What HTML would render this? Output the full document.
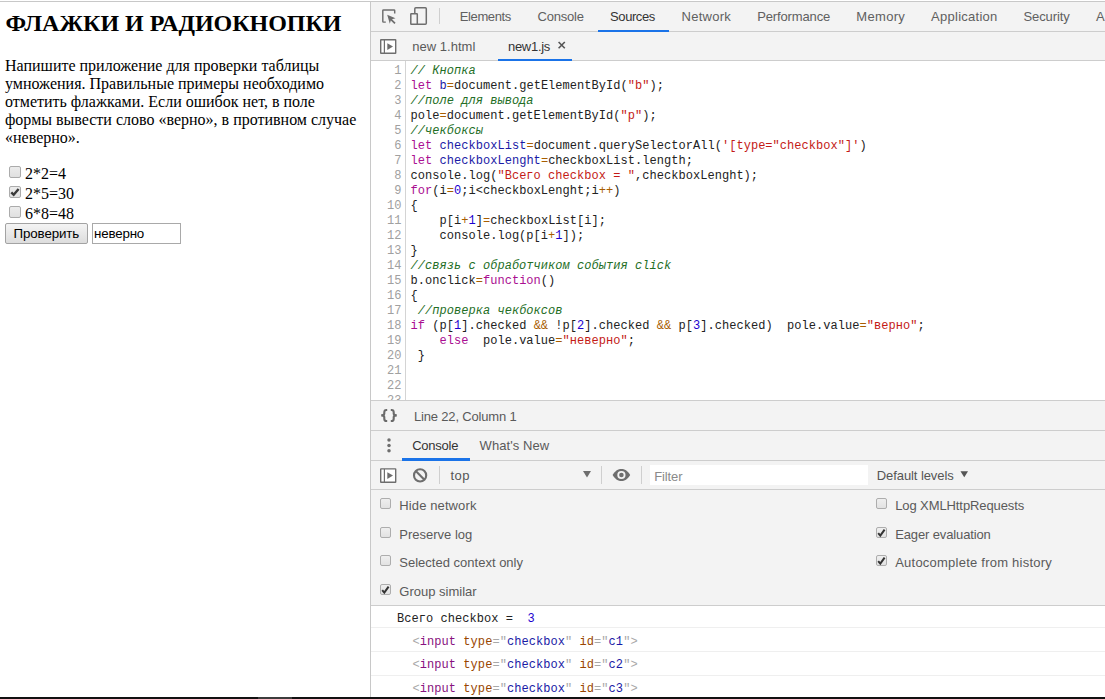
<!DOCTYPE html>
<html><head><meta charset="utf-8">
<style>
*{box-sizing:border-box;margin:0;padding:0}
html,body{width:1105px;height:699px;overflow:hidden;background:#fff;position:relative}
.t{position:absolute;white-space:nowrap}
b,i{font-weight:normal;font-style:normal}
.k{color:#aa0d91}.d{color:#1a1aa6}.s{color:#c41a16}.n{color:#1c00cf}.c{color:#236e25;font-style:italic}.o{color:#a85d00}
.tg{color:#881280}.an{color:#994500}.av{color:#1a1aa6}.br{color:#a8a8a8}
.cb{position:absolute;width:12px;height:12px;border:1px solid #ababab;border-radius:2px;background:linear-gradient(#ececec,#e0e0e0)}
.chk{position:absolute;width:11px;height:11px;border:1px solid #adadad;border-radius:2px;background:linear-gradient(#efefef,#e2e2e2)}
</style></head><body>
<div class="t" style="left:0px;top:0px;width:1105px;height:699px;background:#fff;"></div>
<div class="t" style="left:0px;top:1px;width:1105px;height:1px;background:#c8c8c8;"></div>
<div class="t" style="left:5.5px;top:10px;font:24px/26px 'Liberation Serif',serif;font-weight:bold;color:#000;letter-spacing:-0.037px;">ФЛАЖКИ И РАДИОКНОПКИ</div>
<div class="t" style="left:5px;top:57px;font:16px/17px 'Liberation Serif',serif;color:#000;">Напишите приложение для проверки таблицы</div>
<div class="t" style="left:5px;top:75px;font:16px/17px 'Liberation Serif',serif;color:#000;">умножения. Правильные примеры необходимо</div>
<div class="t" style="left:5px;top:93px;font:16px/17px 'Liberation Serif',serif;color:#000;">отметить флажками. Если ошибок нет, в поле</div>
<div class="t" style="left:5px;top:111px;font:16px/17px 'Liberation Serif',serif;color:#000;">формы вывести слово «верно», в противном случае</div>
<div class="t" style="left:5px;top:129px;font:16px/17px 'Liberation Serif',serif;color:#000;">«неверно».</div>
<div class="cb" style="left:9px;top:166px"></div>
<div class="t" style="left:25px;top:165px;font:16px/17px 'Liberation Serif',serif;color:#000;">2*2=4</div>
<div class="cb" style="left:9px;top:186px"><svg width="12" height="12" style="position:absolute;left:-1px;top:-1px"><path d="M2.3 6.3 L4.7 8.8 L9.6 3" stroke="#3a3a3a" stroke-width="2.4" fill="none"/></svg></div>
<div class="t" style="left:25px;top:185px;font:16px/17px 'Liberation Serif',serif;color:#000;">2*5=30</div>
<div class="cb" style="left:9px;top:206px"></div>
<div class="t" style="left:25px;top:205px;font:16px/17px 'Liberation Serif',serif;color:#000;">6*8=48</div>
<div class="t" style="left:5px;top:223px;width:83px;height:21px;border:1px solid #a3a3a3;border-radius:2px;background:linear-gradient(#f4f4f4,#dddddd)"></div>
<div class="t" style="left:13.5px;top:226px;font:13.33px/15px 'Liberation Sans',sans-serif;color:#000;letter-spacing:-0.113px;">Проверить</div>
<div class="t" style="left:92px;top:223px;width:89px;height:21px;border:1px solid #a9a9a9;background:#fff"></div>
<div class="t" style="left:94px;top:226px;font:13.33px/15px 'Liberation Sans',sans-serif;color:#000;letter-spacing:-0.170px;">неверно</div>
<div class="t" style="left:370px;top:2px;width:735px;height:695px;background:#f3f3f3;"></div>
<div class="t" style="left:370px;top:2px;width:1px;height:695px;background:#c8c8c8;"></div>
<div class="t" style="left:371px;top:31px;width:734px;height:1px;background:#cdcdcd;"></div>
<div class="t" style="left:459.7px;top:9px;font:13px/15px 'Liberation Sans',sans-serif;color:#606060;letter-spacing:-0.361px;">Elements</div>
<div class="t" style="left:537.6px;top:9px;font:13px/15px 'Liberation Sans',sans-serif;color:#606060;letter-spacing:-0.228px;">Console</div>
<div class="t" style="left:610.1px;top:9px;font:13px/15px 'Liberation Sans',sans-serif;color:#333;letter-spacing:-0.427px;">Sources</div>
<div class="t" style="left:681.6px;top:9px;font:13px/15px 'Liberation Sans',sans-serif;color:#606060;letter-spacing:0.246px;">Network</div>
<div class="t" style="left:757.2px;top:9px;font:13px/15px 'Liberation Sans',sans-serif;color:#606060;letter-spacing:-0.138px;">Performance</div>
<div class="t" style="left:856.3px;top:9px;font:13px/15px 'Liberation Sans',sans-serif;color:#606060;letter-spacing:0.326px;">Memory</div>
<div class="t" style="left:931.1px;top:9px;font:13px/15px 'Liberation Sans',sans-serif;color:#606060;letter-spacing:0.264px;">Application</div>
<div class="t" style="left:1023.5px;top:9px;font:13px/15px 'Liberation Sans',sans-serif;color:#606060;letter-spacing:-0.095px;">Security</div>
<div class="t" style="left:1096px;top:9px;font:13px/15px 'Liberation Sans',sans-serif;color:#606060;">A</div>
<div class="t" style="left:598px;top:30px;width:71px;height:2px;background:#1a73e8;"></div>
<div class="t" style="left:371px;top:60px;width:734px;height:1px;background:#cdcdcd;"></div>
<div class="t" style="left:412.2px;top:39px;font:13px/15px 'Liberation Sans',sans-serif;color:#5a5a5a;letter-spacing:0.024px;">new 1.html</div>
<div class="t" style="left:508px;top:39px;font:13px/15px 'Liberation Sans',sans-serif;color:#333;letter-spacing:-0.297px;">new1.js</div>
<div class="t" style="left:498px;top:59px;width:74px;height:2px;background:#1a73e8;"></div>
<div class="t" style="left:371px;top:61px;width:734px;height:339px;background:#fff;"></div>
<div class="t" style="left:405px;top:61px;width:1px;height:339px;background:#d4d4d4;"></div>
<div class="t" style="left:371px;top:400px;width:734px;height:1px;background:#cdcdcd;"></div>
<div class="t" style="left:371px;top:61px;width:734px;height:339px;overflow:hidden">
<div class="t" style="left:23.30000000000001px;top:3px;font:12px/14px 'Liberation Mono',monospace;color:#a0a0a0;">1</div>
<div class="t" style="left:39.5px;top:3px;font:12px/14px 'Liberation Mono',monospace;color:#222;white-space:pre;letter-spacing:0.04px;"><i class="c">// Кнопка</i></div>
<div class="t" style="left:23.30000000000001px;top:18px;font:12px/14px 'Liberation Mono',monospace;color:#a0a0a0;">2</div>
<div class="t" style="left:39.5px;top:18px;font:12px/14px 'Liberation Mono',monospace;color:#222;white-space:pre;letter-spacing:0.04px;"><b class="k">let</b> <b class="d">b</b><b class="o">=</b>document.getElementById(<b class="s">"b"</b>);</div>
<div class="t" style="left:23.30000000000001px;top:33px;font:12px/14px 'Liberation Mono',monospace;color:#a0a0a0;">3</div>
<div class="t" style="left:39.5px;top:33px;font:12px/14px 'Liberation Mono',monospace;color:#222;white-space:pre;letter-spacing:0.04px;"><i class="c">//поле для вывода</i></div>
<div class="t" style="left:23.30000000000001px;top:48px;font:12px/14px 'Liberation Mono',monospace;color:#a0a0a0;">4</div>
<div class="t" style="left:39.5px;top:48px;font:12px/14px 'Liberation Mono',monospace;color:#222;white-space:pre;letter-spacing:0.04px;">pole<b class="o">=</b>document.getElementById(<b class="s">"p"</b>);</div>
<div class="t" style="left:23.30000000000001px;top:63px;font:12px/14px 'Liberation Mono',monospace;color:#a0a0a0;">5</div>
<div class="t" style="left:39.5px;top:63px;font:12px/14px 'Liberation Mono',monospace;color:#222;white-space:pre;letter-spacing:0.04px;"><i class="c">//чекбоксы</i></div>
<div class="t" style="left:23.30000000000001px;top:78px;font:12px/14px 'Liberation Mono',monospace;color:#a0a0a0;">6</div>
<div class="t" style="left:39.5px;top:78px;font:12px/14px 'Liberation Mono',monospace;color:#222;white-space:pre;letter-spacing:0.04px;"><b class="k">let</b> <b class="d">checkboxList</b><b class="o">=</b>document.querySelectorAll(<b class="s">'[type="checkbox"]'</b>)</div>
<div class="t" style="left:23.30000000000001px;top:93px;font:12px/14px 'Liberation Mono',monospace;color:#a0a0a0;">7</div>
<div class="t" style="left:39.5px;top:93px;font:12px/14px 'Liberation Mono',monospace;color:#222;white-space:pre;letter-spacing:0.04px;"><b class="k">let</b> <b class="d">checkboxLenght</b><b class="o">=</b>checkboxList.length;</div>
<div class="t" style="left:23.30000000000001px;top:108px;font:12px/14px 'Liberation Mono',monospace;color:#a0a0a0;">8</div>
<div class="t" style="left:39.5px;top:108px;font:12px/14px 'Liberation Mono',monospace;color:#222;white-space:pre;letter-spacing:0.04px;">console.log(<b class="s">"Всего checkbox = "</b>,checkboxLenght);</div>
<div class="t" style="left:23.30000000000001px;top:123px;font:12px/14px 'Liberation Mono',monospace;color:#a0a0a0;">9</div>
<div class="t" style="left:39.5px;top:123px;font:12px/14px 'Liberation Mono',monospace;color:#222;white-space:pre;letter-spacing:0.04px;"><b class="k">for</b>(i<b class="o">=</b><b class="n">0</b>;i&lt;checkboxLenght;i<b class="o">++</b>)</div>
<div class="t" style="left:16.100000000000023px;top:138px;font:12px/14px 'Liberation Mono',monospace;color:#a0a0a0;">10</div>
<div class="t" style="left:39.5px;top:138px;font:12px/14px 'Liberation Mono',monospace;color:#222;white-space:pre;letter-spacing:0.04px;">{</div>
<div class="t" style="left:16.100000000000023px;top:153px;font:12px/14px 'Liberation Mono',monospace;color:#a0a0a0;">11</div>
<div class="t" style="left:39.5px;top:153px;font:12px/14px 'Liberation Mono',monospace;color:#222;white-space:pre;letter-spacing:0.04px;">    p[i<b class="o">+</b><b class="n">1</b>]<b class="o">=</b>checkboxList[i];</div>
<div class="t" style="left:16.100000000000023px;top:168px;font:12px/14px 'Liberation Mono',monospace;color:#a0a0a0;">12</div>
<div class="t" style="left:39.5px;top:168px;font:12px/14px 'Liberation Mono',monospace;color:#222;white-space:pre;letter-spacing:0.04px;">    console.log(p[i<b class="o">+</b><b class="n">1</b>]);</div>
<div class="t" style="left:16.100000000000023px;top:183px;font:12px/14px 'Liberation Mono',monospace;color:#a0a0a0;">13</div>
<div class="t" style="left:39.5px;top:183px;font:12px/14px 'Liberation Mono',monospace;color:#222;white-space:pre;letter-spacing:0.04px;">}</div>
<div class="t" style="left:16.100000000000023px;top:198px;font:12px/14px 'Liberation Mono',monospace;color:#a0a0a0;">14</div>
<div class="t" style="left:39.5px;top:198px;font:12px/14px 'Liberation Mono',monospace;color:#222;white-space:pre;letter-spacing:0.04px;"><i class="c">//связь с обработчиком события click</i></div>
<div class="t" style="left:16.100000000000023px;top:213px;font:12px/14px 'Liberation Mono',monospace;color:#a0a0a0;">15</div>
<div class="t" style="left:39.5px;top:213px;font:12px/14px 'Liberation Mono',monospace;color:#222;white-space:pre;letter-spacing:0.04px;">b.onclick<b class="o">=</b><b class="k">function</b>()</div>
<div class="t" style="left:16.100000000000023px;top:228px;font:12px/14px 'Liberation Mono',monospace;color:#a0a0a0;">16</div>
<div class="t" style="left:39.5px;top:228px;font:12px/14px 'Liberation Mono',monospace;color:#222;white-space:pre;letter-spacing:0.04px;">{</div>
<div class="t" style="left:16.100000000000023px;top:243px;font:12px/14px 'Liberation Mono',monospace;color:#a0a0a0;">17</div>
<div class="t" style="left:39.5px;top:243px;font:12px/14px 'Liberation Mono',monospace;color:#222;white-space:pre;letter-spacing:0.04px;"> <i class="c">//проверка чекбоксов</i></div>
<div class="t" style="left:16.100000000000023px;top:258px;font:12px/14px 'Liberation Mono',monospace;color:#a0a0a0;">18</div>
<div class="t" style="left:39.5px;top:258px;font:12px/14px 'Liberation Mono',monospace;color:#222;white-space:pre;letter-spacing:0.04px;"><b class="k">if</b> (p[<b class="n">1</b>].checked <b class="o">&amp;&amp;</b> !p[<b class="n">2</b>].checked <b class="o">&amp;&amp;</b> p[<b class="n">3</b>].checked)  pole.value<b class="o">=</b><b class="s">"верно"</b>;</div>
<div class="t" style="left:16.100000000000023px;top:273px;font:12px/14px 'Liberation Mono',monospace;color:#a0a0a0;">19</div>
<div class="t" style="left:39.5px;top:273px;font:12px/14px 'Liberation Mono',monospace;color:#222;white-space:pre;letter-spacing:0.04px;">    <b class="k">else</b>  pole.value<b class="o">=</b><b class="s">"неверно"</b>;</div>
<div class="t" style="left:16.100000000000023px;top:288px;font:12px/14px 'Liberation Mono',monospace;color:#a0a0a0;">20</div>
<div class="t" style="left:39.5px;top:288px;font:12px/14px 'Liberation Mono',monospace;color:#222;white-space:pre;letter-spacing:0.04px;"> }</div>
<div class="t" style="left:16.100000000000023px;top:303px;font:12px/14px 'Liberation Mono',monospace;color:#a0a0a0;">21</div>
<div class="t" style="left:16.100000000000023px;top:318px;font:12px/14px 'Liberation Mono',monospace;color:#a0a0a0;">22</div>
<div class="t" style="left:16.100000000000023px;top:333px;font:12px/14px 'Liberation Mono',monospace;color:#a0a0a0;">23</div>
</div>
<div class="t" style="left:371px;top:430px;width:734px;height:1px;background:#cdcdcd;"></div>
<div class="t" style="left:414px;top:409px;font:13px/15px 'Liberation Sans',sans-serif;color:#5a5a5a;letter-spacing:-0.177px;">Line 22, Column 1</div>
<div class="t" style="left:371px;top:460px;width:734px;height:1px;background:#cdcdcd;"></div>
<div class="t" style="left:412.2px;top:438px;font:13px/15px 'Liberation Sans',sans-serif;color:#333;letter-spacing:-0.242px;">Console</div>
<div class="t" style="left:479.6px;top:438px;font:13px/15px 'Liberation Sans',sans-serif;color:#5a5a5a;letter-spacing:0.076px;">What's New</div>
<div class="t" style="left:402px;top:458px;width:68px;height:3px;background:#1a73e8;"></div>
<div class="t" style="left:371px;top:489px;width:734px;height:1px;background:#cdcdcd;"></div>
<div class="t" style="left:450.5px;top:468px;font:13px/15px 'Liberation Sans',sans-serif;color:#555;letter-spacing:0.443px;">top</div>
<div class="t" style="left:650px;top:465px;width:218px;height:20px;background:#fff;"></div>
<div class="t" style="left:654.2px;top:469px;font:13px/15px 'Liberation Sans',sans-serif;color:#8a8a8a;letter-spacing:-0.098px;">Filter</div>
<div class="t" style="left:876.8px;top:468px;font:13px/15px 'Liberation Sans',sans-serif;color:#555;letter-spacing:-0.088px;">Default levels</div>
<div class="t" style="left:371px;top:605px;width:734px;height:1px;background:#cdcdcd;"></div>
<div class="chk" style="left:380px;top:498px"></div>
<div class="t" style="left:399.3px;top:498px;font:13px/15px 'Liberation Sans',sans-serif;color:#5a5a5a;letter-spacing:0.111px;">Hide network</div>
<div class="chk" style="left:380px;top:527px"></div>
<div class="t" style="left:399.3px;top:527px;font:13px/15px 'Liberation Sans',sans-serif;color:#5a5a5a;">Preserve log</div>
<div class="chk" style="left:380px;top:555px"></div>
<div class="t" style="left:399.3px;top:555px;font:13px/15px 'Liberation Sans',sans-serif;color:#5a5a5a;letter-spacing:0.006px;">Selected context only</div>
<div class="chk" style="left:380px;top:584px"><svg width="11" height="11" style="position:absolute;left:-1px;top:-1px"><path d="M2.2 6.2 L4.3 8.6 L8.6 2.6" stroke="#333" stroke-width="2" fill="none"/></svg></div>
<div class="t" style="left:399.3px;top:584px;font:13px/15px 'Liberation Sans',sans-serif;color:#5a5a5a;">Group similar</div>
<div class="chk" style="left:876px;top:498px"></div>
<div class="t" style="left:895.2px;top:498px;font:13px/15px 'Liberation Sans',sans-serif;color:#5a5a5a;letter-spacing:-0.094px;">Log XMLHttpRequests</div>
<div class="chk" style="left:876px;top:527px"><svg width="11" height="11" style="position:absolute;left:-1px;top:-1px"><path d="M2.2 6.2 L4.3 8.6 L8.6 2.6" stroke="#333" stroke-width="2" fill="none"/></svg></div>
<div class="t" style="left:895.2px;top:527px;font:13px/15px 'Liberation Sans',sans-serif;color:#5a5a5a;letter-spacing:-0.129px;">Eager evaluation</div>
<div class="chk" style="left:876px;top:555px"><svg width="11" height="11" style="position:absolute;left:-1px;top:-1px"><path d="M2.2 6.2 L4.3 8.6 L8.6 2.6" stroke="#333" stroke-width="2" fill="none"/></svg></div>
<div class="t" style="left:895.2px;top:555px;font:13px/15px 'Liberation Sans',sans-serif;color:#5a5a5a;letter-spacing:0.232px;">Autocomplete from history</div>
<div class="t" style="left:371px;top:606px;width:734px;height:91px;background:#fff;"></div>
<div class="t" style="left:371px;top:627px;width:734px;height:1px;background:#efefef;"></div>
<div class="t" style="left:371px;top:651px;width:734px;height:1px;background:#efefef;"></div>
<div class="t" style="left:371px;top:675px;width:734px;height:1px;background:#efefef;"></div>
<div class="t" style="left:397px;top:612px;font:12px/14px 'Liberation Mono',monospace;color:#222;white-space:pre;letter-spacing:0.05px;">Всего checkbox =  <span class="n">3</span></div>
<div class="t" style="left:412.5px;top:635px;font:12px/14px 'Liberation Mono',monospace;color:#222;white-space:pre;letter-spacing:0.06px;"><span class="br">&lt;</span><span class="tg">input</span> <span class="an">type</span><span class="br">="</span><span class="av">checkbox</span><span class="br">"</span> <span class="an">id</span><span class="br">="</span><span class="av">c1</span><span class="br">"&gt;</span></div>
<div class="t" style="left:412.5px;top:658px;font:12px/14px 'Liberation Mono',monospace;color:#222;white-space:pre;letter-spacing:0.06px;"><span class="br">&lt;</span><span class="tg">input</span> <span class="an">type</span><span class="br">="</span><span class="av">checkbox</span><span class="br">"</span> <span class="an">id</span><span class="br">="</span><span class="av">c2</span><span class="br">"&gt;</span></div>
<div class="t" style="left:412.5px;top:682px;font:12px/14px 'Liberation Mono',monospace;color:#222;white-space:pre;letter-spacing:0.06px;"><span class="br">&lt;</span><span class="tg">input</span> <span class="an">type</span><span class="br">="</span><span class="av">checkbox</span><span class="br">"</span> <span class="an">id</span><span class="br">="</span><span class="av">c3</span><span class="br">"&gt;</span></div>
<div class="t" style="left:0px;top:697px;width:1105px;height:2px;background:#111;"></div>
<div class="t" style="left:258px;top:697px;width:34px;height:2px;background:#3c3c3c;"></div>
<svg class="t" style="left:0;top:0" width="1105" height="699" viewBox="0 0 1105 699">
<g fill="none" stroke="#6e6e6e" stroke-width="1.5">
 <path d="M385.8 22.1 H383.5 Q382.8 22.1 382.8 21.4 V10.6 Q382.8 9.9 383.5 9.9 H394 Q394.7 9.9 394.7 10.6 V13.6" stroke-width="1.45"/>
 <rect x="414.8" y="7.8" width="11.5" height="16.5" rx="1"/>
 <rect x="410.8" y="13.8" width="6.5" height="10.5" rx="0.5" fill="#f3f3f3"/>
 <rect x="380.7" y="39.7" width="15" height="13.6" rx="0.3" fill="#fff" stroke-width="1.4"/>
 <rect x="380.7" y="468.9" width="15" height="13.4" rx="0.3" fill="#fff" stroke-width="1.4"/>
 <circle cx="420.1" cy="475.4" r="6.1" stroke-width="2.1"/>
 <path d="M415.8 471.1 L424.4 479.7" stroke-width="2.1"/>
</g>
<path d="M387.2 14.8 L395.5 18.2 L392 19.2 L395.6 22.8 L394.4 24 L390.8 20.4 L389.8 23.8 Z" fill="#6e6e6e"/>
<path d="M384.4 40 V53" stroke="#6e6e6e" stroke-width="1.2"/>
<path d="M384.4 469 V482" stroke="#6e6e6e" stroke-width="1.2"/>
<path d="M387.3 43.3 L393 46.6 L387.3 50 Z" fill="#6e6e6e"/>
<path d="M387.3 472.2 L393 475.6 L387.3 479 Z" fill="#6e6e6e"/>
<g stroke="#cfcfcf" stroke-width="1">
 <path d="M439.5 8 V24"/><path d="M439.5 466 V484"/><path d="M601.5 466 V484"/><path d="M641.5 466 V484"/>
</g>
<path d="M558.6 42 L564.8 48.2 M564.8 42 L558.6 48.2" stroke="#555" stroke-width="1.6"/>
<g fill="#6e6e6e"><circle cx="389" cy="440.1" r="1.75"/><circle cx="389" cy="445.4" r="1.75"/><circle cx="389" cy="450.7" r="1.75"/></g>
<path d="M583 471 H591 L587 477.5 Z" fill="#6e6e6e"/>
<path d="M960.5 471.2 H968 L964.25 477.2 Z" fill="#555"/>
<path d="M612.6 475 C615.2 470.6 618.2 469 621.4 469 C624.6 469 627.6 470.6 630.2 475 C627.6 479.4 624.6 481 621.4 481 C618.2 481 615.2 479.4 612.6 475 Z" fill="#6e6e6e"/>
<circle cx="621.4" cy="475" r="4.1" fill="#f3f3f3"/>
<circle cx="621.4" cy="475" r="2.3" fill="#6e6e6e"/>
</svg>
<svg class="t" style="left:0;top:0" width="1105" height="699"><g fill="none" stroke="#6a6a6a" stroke-width="2.1"><path d="M387.2 410 H386.4 Q384.3 410 384.3 412.3 V413.6 Q384.3 415.4 381.2 415.4 Q384.3 415.4 384.3 417.2 V418.7 Q384.3 421 386.4 421 H387.2"/><path d="M390.8 410 H391.6 Q393.7 410 393.7 412.3 V413.6 Q393.7 415.4 396.8 415.4 Q393.7 415.4 393.7 417.2 V418.7 Q393.7 421 391.6 421 H390.8"/></g></svg>
</body></html>
